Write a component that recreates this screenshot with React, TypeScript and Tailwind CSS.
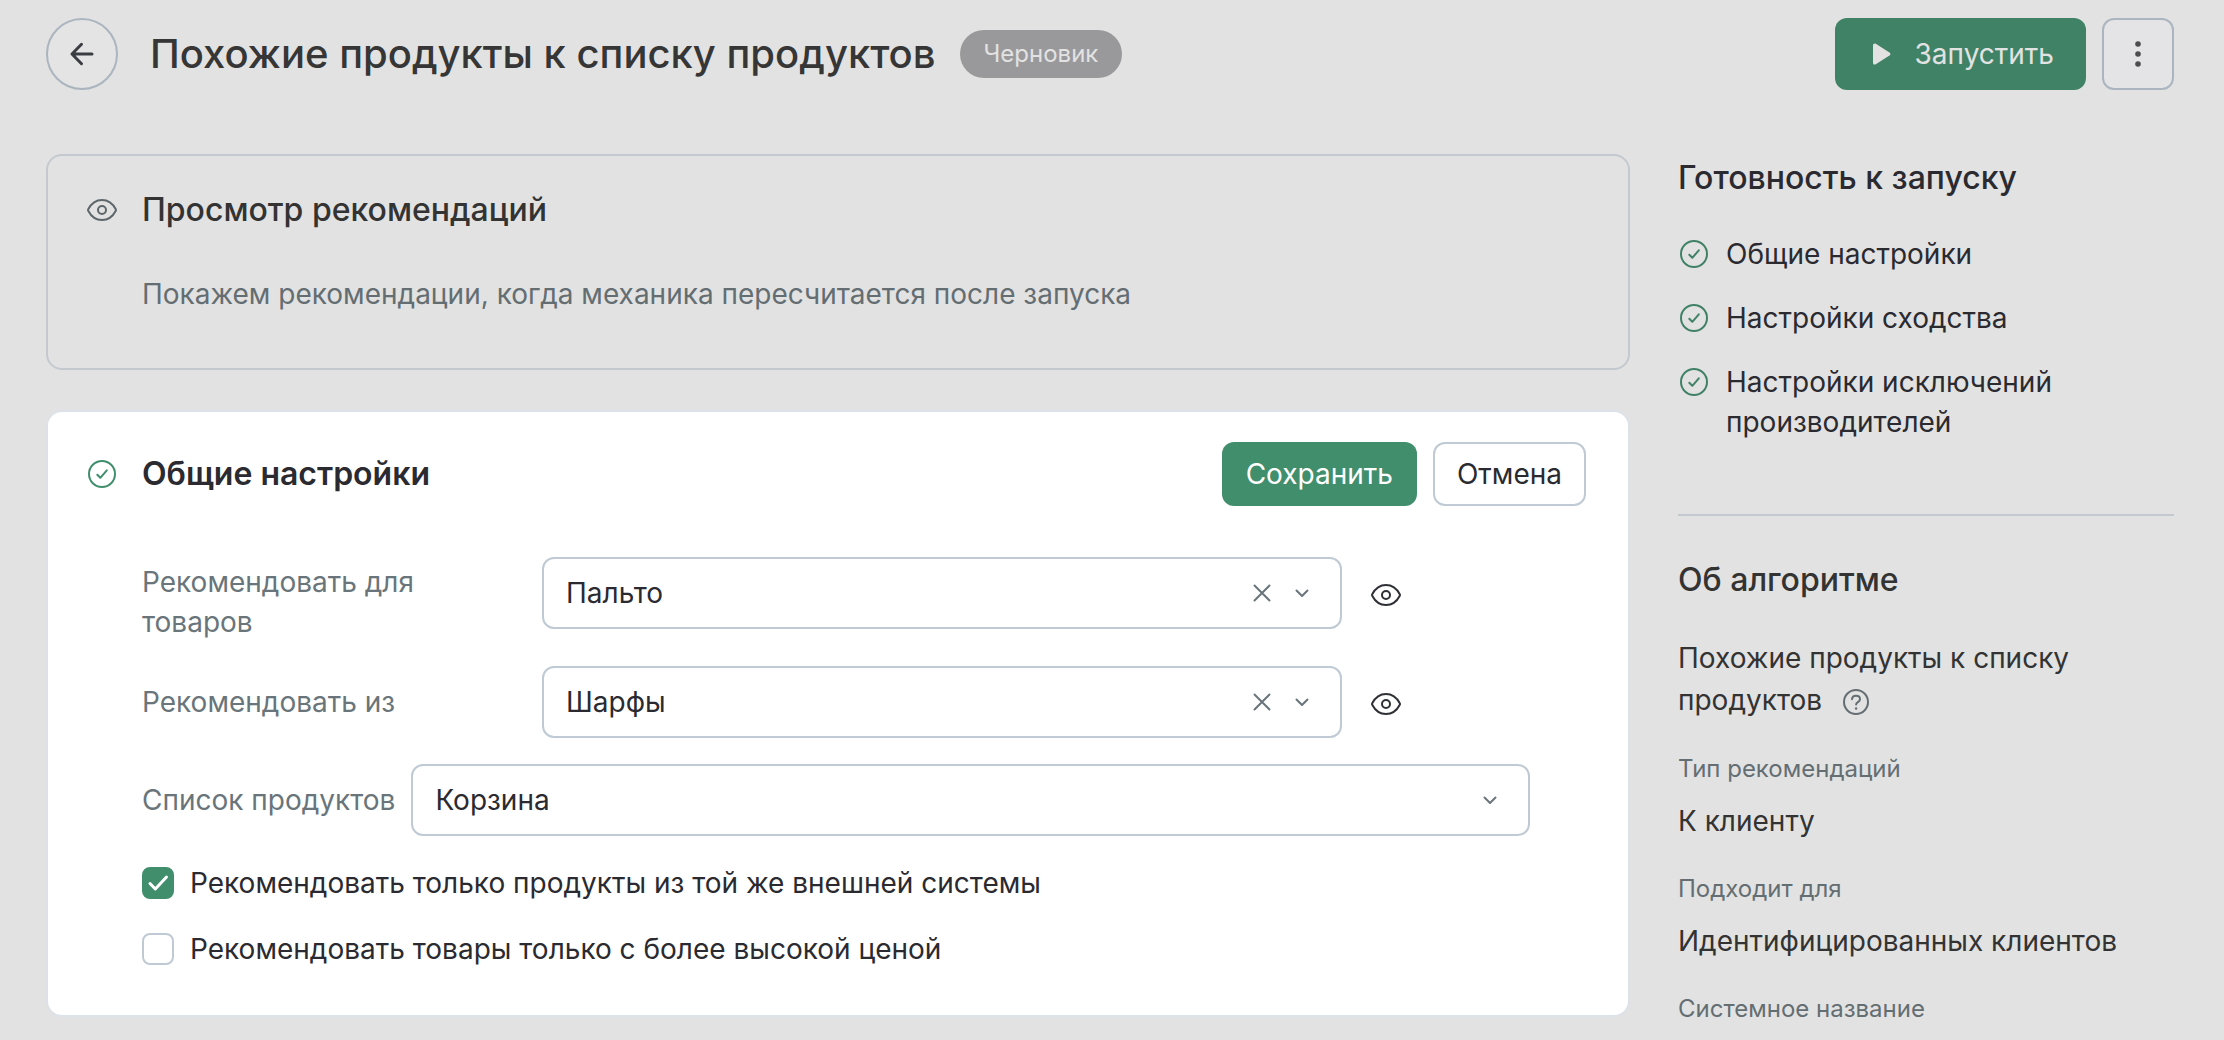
import React, { useState } from "react";

type IconProps = { className?: string };

function ArrowLeftIcon({ className }: IconProps) {
  return (
    <svg viewBox="0 0 32 32" fill="none" stroke="currentColor" strokeWidth="3" strokeLinecap="round" strokeLinejoin="round" className={className} aria-hidden="true">
      <path d="M26 16H6M15.5 6.3 6 16l9.500 9.700" />
    </svg>
  );
}

function EyeIcon({ className }: IconProps) {
  return (
    <svg viewBox="0 0 32 32" fill="none" stroke="currentColor" strokeWidth="2" strokeLinecap="round" strokeLinejoin="round" className={className} aria-hidden="true">
      <path d="M2.200 15.300C5 10 10 6 16 6s11 4 13.800 9.300a1.400 1.400 0 0 1 0 1.400C27 22 22 26 16 26S5 22 2.200 16.700a1.400 1.400 0 0 1 0-1.400Z" />
      <circle cx="16" cy="16" r="4" />
    </svg>
  );
}

function CheckCircleIcon({ className }: IconProps) {
  return (
    <svg viewBox="0 0 32 32" fill="none" stroke="currentColor" strokeWidth="2" strokeLinecap="round" strokeLinejoin="round" className={className} aria-hidden="true">
      <circle cx="16" cy="16" r="13" />
      <path d="m11.300 16.800 3 3 6.500-7.500" />
    </svg>
  );
}

function PlayIcon({ className }: IconProps) {
  return (
    <svg viewBox="0 0 32 32" fill="currentColor" className={className} aria-hidden="true">
      <path d="M6 7.300c0-1.600 1.500-2.400 2.800-1.600l13.700 8.700c1.200.8 1.200 2.400 0 3.200L8.800 26.300c-1.300.8-2.800 0-2.800-1.600Z" />
    </svg>
  );
}

function DotsIcon({ className }: IconProps) {
  return (
    <svg viewBox="0 0 32 32" fill="currentColor" className={className} aria-hidden="true">
      <circle cx="16" cy="6" r="2.800" />
      <circle cx="16" cy="16" r="2.800" />
      <circle cx="16" cy="26" r="2.800" />
    </svg>
  );
}

function CrossIcon({ className }: IconProps) {
  return (
    <svg viewBox="0 0 24 24" fill="none" stroke="currentColor" strokeWidth="2" strokeLinecap="round" className={className} aria-hidden="true">
      <path d="m4.500 4.500 15 15m0-15-15 15" />
    </svg>
  );
}

function ChevronIcon({ className }: IconProps) {
  return (
    <svg viewBox="0 0 24 24" fill="none" stroke="currentColor" strokeWidth="2" strokeLinecap="round" strokeLinejoin="round" className={className} aria-hidden="true">
      <path d="m6.500 9.500 5.500 5.500 5.500-5.500" />
    </svg>
  );
}

function HelpIcon({ className }: IconProps) {
  return (
    <svg viewBox="0 0 28 28" fill="none" stroke="currentColor" strokeWidth="2" strokeLinecap="round" strokeLinejoin="round" className={className} aria-hidden="true">
      <circle cx="14" cy="14" r="12" />
      <path d="M10 11.200C10.200 9.100 11.800 7.800 14 7.800c2.300 0 4 1.400 4 3.400 0 2.900-3.900 2.900-3.900 5.300" />
      <circle cx="14.100" cy="20.500" r="1.200" fill="currentColor" stroke="none" />
    </svg>
  );
}

type SelectProps = {
  id: string;
  value: string;
  options: string[];
  onChange: (value: string) => void;
  onClear?: () => void;
};

function Select({ id, value, options, onChange, onClear }: SelectProps) {
  return (
    <div className="relative min-w-0 flex-1">
      <select
        id={id}
        value={value}
        onChange={(e) => onChange(e.target.value)}
        className="block h-18 w-full appearance-none rounded-xl border-2 border-[#bfcad4] bg-white pr-28 pl-[22px] text-[28px] text-[#2a2a30]"
      >
        <option value=""></option>
        {options.map((o) => (
          <option key={o}>{o}</option>
        ))}
      </select>
      <div className="pointer-events-none absolute inset-y-0 right-7 flex items-center gap-4 text-[#69757a]">
        {onClear && (
          <button type="button" aria-label="Очистить" onClick={onClear} className="pointer-events-auto">
            <CrossIcon className="size-6" />
          </button>
        )}
        <ChevronIcon className="size-6" />
      </div>
    </div>
  );
}

type FieldRowProps = { id: string; label: string; initial: string; multiline?: boolean };

function FieldRow({ id, label, initial, multiline }: FieldRowProps) {
  const [value, setValue] = useState(initial);
  return (
    <div className="flex items-start">
      <div className={multiline ? "w-[400px] shrink-0 pt-[5px] pr-20" : "w-[400px] shrink-0 pt-4 pr-20"}>
        <label htmlFor={id} className="block leading-10 text-[#69757a]">
          {label}
        </label>
      </div>
      <div className="flex max-w-[860px] flex-1 items-center gap-7">
        <Select id={id} value={value} options={[initial]} onChange={setValue} onClear={() => setValue("")} />
        <button type="button" aria-label="Просмотреть" className="flex h-18 items-center pt-1 text-[#2f3036]">
          <EyeIcon className="size-8" />
        </button>
      </div>
    </div>
  );
}

type CheckRowProps = { label: string; initial: boolean };

function CheckRow({ label, initial }: CheckRowProps) {
  const [checked, setChecked] = useState(initial);
  return (
    <label className="flex w-fit items-center gap-4 leading-10">
      <span className="relative flex size-8 shrink-0">
        <input
          type="checkbox"
          checked={checked}
          onChange={(e) => setChecked(e.target.checked)}
          className="size-8 appearance-none rounded-lg border-2 border-[#bfcad4] bg-white checked:border-[#418e6d] checked:bg-[#418e6d]"
        />
        {checked && (
          <svg viewBox="0 0 32 32" fill="none" stroke="currentColor" strokeWidth="3" strokeLinecap="round" strokeLinejoin="round" className="pointer-events-none absolute inset-0 size-8 text-white" aria-hidden="true">
            <path d="m8 16.500 5.300 5.500L24.500 10" />
          </svg>
        )}
      </span>
      {label}
    </label>
  );
}

const readiness = ["Общие настройки", "Настройки сходства", "Настройки исключений производителей"];

export default function App() {
  const [list, setList] = useState("Корзина");
  return (
    <div className="min-h-screen bg-[#e2e2e2] pt-[18px] pr-[50px] pl-[46px] font-['Inter',sans-serif] text-[28px] text-[#2a2a30]">
      <header className="flex h-18 items-center justify-between">
        <div className="flex items-center">
          <button type="button" aria-label="Назад" className="flex size-18 items-center justify-center rounded-full border-2 border-[#abb5bf] bg-[#e4e4e4] text-[#393c40]">
            <ArrowLeftIcon className="size-8" />
          </button>
          <h1 className="ml-8 text-[40px] leading-12 font-medium text-[#363636]">Похожие продукты к списку продуктов</h1>
          <span className="ml-6 flex h-12 items-center rounded-full bg-[#99999b] px-6 text-2xl text-[#e2e2e2]">Черновик</span>
        </div>
        <div className="flex gap-4">
          <button type="button" className="flex h-18 items-center gap-4 rounded-xl bg-[#408265] px-8 text-[#e2e2e2]">
            <PlayIcon className="size-8" />
            Запустить
          </button>
          <button type="button" aria-label="Ещё" className="flex size-18 items-center justify-center rounded-xl border-2 border-[#abb5bf] bg-[#e4e4e6] text-[#4d4d50]">
            <DotsIcon className="size-8" />
          </button>
        </div>
      </header>

      <div className="mt-16 flex items-start gap-12">
        <main className="min-w-0 flex-1">
          <section className="rounded-2xl border-2 border-[#c3c9ce] pt-[34px] pr-10 pb-[54px] pl-[38px]">
            <div className="flex items-center gap-6">
              <EyeIcon className="size-8 text-[#5c666b]" />
              <h2 className="text-[32px] leading-10 font-medium text-[#333333]">Просмотр рекомендаций</h2>
            </div>
            <p className="mt-11 pl-14 leading-10 text-[#646e72]">Покажем рекомендации, когда механика пересчитается после запуска</p>
          </section>

          <section className="mt-10 rounded-2xl border-2 border-[#dce2e7] bg-white pt-[30px] pb-[46px] pl-[38px]">
            <div className="flex h-16 items-center gap-6 pr-[42px]">
              <CheckCircleIcon className="size-8 text-[#418e6d]" />
              <h2 className="flex-1 text-[32px] leading-10 font-semibold">Общие настройки</h2>
              <div className="flex gap-4">
                <button type="button" className="h-16 rounded-xl bg-[#418e6d] px-6 text-white">Сохранить</button>
                <button type="button" className="h-16 rounded-xl border-2 border-[#bfcad4] bg-white px-[22px]">Отмена</button>
              </div>
            </div>

            <form className="mt-[51px] pr-[98px] pl-14">
              <div className="flex flex-col gap-6">
                <FieldRow id="for-goods" label="Рекомендовать для товаров" initial="Пальто" multiline />
                <FieldRow id="from-goods" label="Рекомендовать из" initial="Шарфы" />
              </div>
              <div className="mt-[26px] flex items-center gap-4">
                <label htmlFor="product-list" className="shrink-0 text-[#69757a]">
                  Список продуктов
                </label>
                <Select id="product-list" value={list} options={["Корзина"]} onChange={setList} />
              </div>
              <div className="mt-[27px] flex flex-col gap-[26px]">
                <CheckRow label="Рекомендовать только продукты из той же внешней системы" initial={true} />
                <CheckRow label="Рекомендовать товары только с более высокой ценой" initial={false} />
              </div>
            </form>
          </section>
        </main>

        <aside className="w-[496px] shrink-0 pt-1">
          <h2 className="text-[32px] leading-10 font-medium">Готовность к запуску</h2>
          <ul className="mt-9 flex flex-col gap-6">
            {readiness.map((item) => (
              <li key={item} className="flex gap-4 leading-10">
                <CheckCircleIcon className="mt-1 size-8 shrink-0 text-[#408265]" />
                {item}
              </li>
            ))}
          </ul>

          <div className="mt-18 border-t-2 border-[#c3c9ce] pt-11 text-[#333333]">
            <h2 className="text-[32px] leading-10 font-medium">Об алгоритме</h2>
            <p className="mt-[37px] leading-[42px]">
              Похожие продукты к списку продуктов
              <button type="button" aria-label="Подробнее" className="ml-5 align-middle text-[#646e72]">
                <HelpIcon className="size-7" />
              </button>
            </p>
            <dl className="mt-8">
              <dt className="text-2xl leading-8 text-[#646e72]">Тип рекомендаций</dt>
              <dd className="mt-4 mb-8 leading-10">К клиенту</dd>
              <dt className="text-2xl leading-8 text-[#646e72]">Подходит для</dt>
              <dd className="mt-4 mb-8 leading-10">Идентифицированных клиентов</dd>
              <dt className="text-2xl leading-8 text-[#646e72]">Системное название</dt>
            </dl>
          </div>
        </aside>
      </div>
    </div>
  );
}
